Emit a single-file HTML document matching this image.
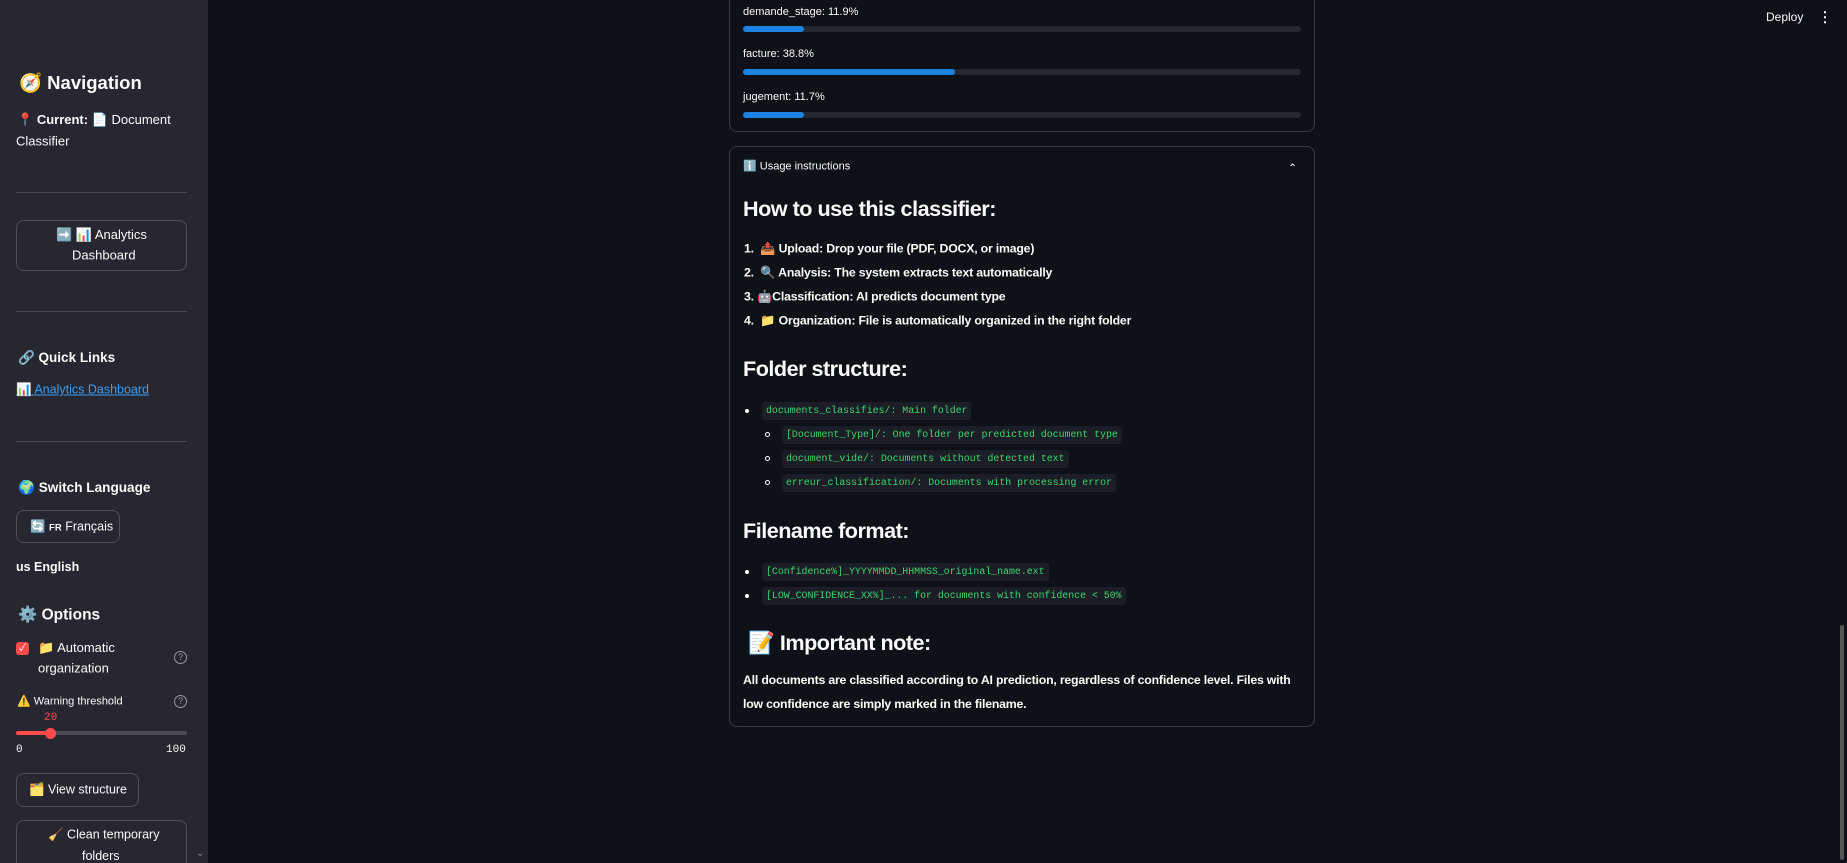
<!DOCTYPE html>
<html><head><meta charset="utf-8"><style>
*{margin:0;padding:0;box-sizing:border-box}
body{width:1847px;height:863px;background:#0e1117;color:#fafafa;font-family:"Liberation Sans","Noto Sans CJK JP",sans-serif;overflow:hidden;position:relative}
.a{position:absolute;white-space:nowrap}
#sb{position:absolute;left:0;top:0;width:208px;height:863px;background:#262730;overflow:hidden}
.hr{position:absolute;left:16px;width:171px;height:1px;background:#4a4b55}
.btn{position:absolute;border:1px solid #4f505a;border-radius:8px;background:#262730}
.t{transform:translateY(-50%)}
.bar{position:absolute;left:743px;width:558px;height:6px;border-radius:3px;background:#262730}
.bar i{position:absolute;left:0;top:0;height:6px;border-radius:3px;background:#1c83e1}
.code{position:absolute;height:18px;background:#1b1e26;border-radius:3px;color:#3dd56d;font-family:"Liberation Mono",monospace;font-size:9.9px;line-height:18px;padding:0 4px;white-space:nowrap}
.dot{position:absolute;width:4px;height:4px;border-radius:50%;background:#fafafa}
.cir{position:absolute;width:5px;height:5px;border-radius:50%;border:1px solid #fafafa}
h3{position:absolute;font-size:21.6px;font-weight:bold;letter-spacing:-0.5px;white-space:nowrap}
.li{font-size:12.3px;font-weight:bold;letter-spacing:-0.2px}
.help{position:absolute;width:13px;height:13px;border:1.3px solid #999;border-radius:50%;font-size:9px;color:#999;text-align:center;line-height:11px}
</style></head><body>
<div id="sb">
<div class="a t" style="left:19px;top:83px;font-size:18.5px;font-weight:bold">🧭 Navigation</div>
<div class="a t" style="left:17px;top:120px;font-size:13px">📍 <b>Current:</b> 📄 Document</div>
<div class="a t" style="left:16px;top:141px;font-size:13px">Classifier</div>
<div class="hr" style="top:192px"></div>
<div class="btn" style="left:16px;top:220px;width:171px;height:51px"></div>
<div class="a t" style="left:56px;top:235px;font-size:13px">➡️ 📊 Analytics</div>
<div class="a t" style="left:72px;top:255px;font-size:13px">Dashboard</div>
<div class="hr" style="top:311px"></div>
<div class="a t" style="left:18px;top:358px;font-size:13.5px;font-weight:bold">🔗 Quick Links</div>
<div class="a t" style="left:16px;top:390px;font-size:12.5px;color:#3d9df3;text-decoration:underline">📊 Analytics Dashboard</div>
<div class="hr" style="top:441px"></div>
<div class="a t" style="left:18px;top:488px;font-size:13.6px;font-weight:bold">🌍 Switch Language</div>
<div class="btn" style="left:16px;top:510px;width:104px;height:33px"></div>
<div class="a t" style="left:30px;top:527px;font-size:12.5px">🔄 <span style="font-size:9.5px;font-weight:bold">FR</span> Français</div>
<div class="a t" style="left:16px;top:567px;font-size:12.5px;font-weight:bold">us English</div>
<div class="a t" style="left:18px;top:615px;font-size:15.5px;font-weight:bold">⚙️ Options</div>
<div class="a" style="left:16px;top:642px;width:13px;height:13px;background:#ff4b4b;border-radius:3px;color:#fff;font-size:10px;text-align:center;line-height:13px">✓</div>
<div class="a t" style="left:38px;top:648px;font-size:13px">📁 Automatic</div>
<div class="a t" style="left:38px;top:668px;font-size:13px">organization</div>
<div class="help" style="left:174px;top:651px">?</div>
<div class="a t" style="left:17px;top:701px;font-size:11px">⚠️ Warning threshold</div>
<div class="help" style="left:174px;top:695px">?</div>
<div class="a t" style="left:44px;top:718px;font-size:11px;color:#ff4b4b;font-family:'Liberation Mono',monospace">20</div>
<div class="a" style="left:16px;top:731px;width:171px;height:4px;border-radius:2px;background:#4a4b55"></div>
<div class="a" style="left:16px;top:731px;width:35px;height:4px;border-radius:2px;background:#ff4b4b"></div>
<div class="a" style="left:45px;top:728px;width:11px;height:11px;border-radius:50%;background:#ff4b4b"></div>
<div class="a t" style="left:16px;top:750px;font-size:11px;font-family:'Liberation Mono',monospace">0</div>
<div class="a t" style="left:166px;top:750px;font-size:11px;font-family:'Liberation Mono',monospace">100</div>
<div class="btn" style="left:16px;top:773px;width:123px;height:34px"></div>
<div class="a t" style="left:29px;top:790px;font-size:12.5px">🗂️ View structure</div>
<div class="btn" style="left:16px;top:820px;width:171px;height:60px"></div>
<div class="a t" style="left:48px;top:835px;font-size:12.5px">🧹 Clean temporary</div>
<div class="a t" style="left:82px;top:856px;font-size:12.5px">folders</div>
<div class="a" style="left:196px;top:848px;font-size:10px;color:#888">⌄</div>
</div>
<div class="a t" style="left:1766px;top:17px;font-size:12px">Deploy</div>
<div class="a t" style="left:1818px;top:17px;font-size:14px;font-weight:bold">⋮</div>
<div class="a" style="left:1840px;top:625px;width:4px;height:235px;border-radius:2px;background:#555"></div>

<div class="a" style="left:729px;top:-10px;width:586px;height:142px;border:1px solid #3a3c44;border-radius:8px"></div>
<div class="a t" style="left:743px;top:12px;font-size:11px">demande_stage: 11.9%</div>
<div class="bar" style="top:26px"><i style="width:61px"></i></div>
<div class="a t" style="left:743px;top:54px;font-size:11px">facture: 38.8%</div>
<div class="bar" style="top:69px"><i style="width:212px"></i></div>
<div class="a t" style="left:743px;top:97px;font-size:11px">jugement: 11.7%</div>
<div class="bar" style="top:112px"><i style="width:61px"></i></div>

<div class="a" style="left:729px;top:146px;width:586px;height:581px;border:1px solid #3a3c44;border-radius:8px"></div>
<div class="a t" style="left:743px;top:166px;font-size:11px">ℹ️ Usage instructions</div>
<div class="a t" style="left:1288px;top:168px;font-size:11px">⌃</div>
<h3 style="left:743px;top:196px">How to use this classifier:</h3>
<div class="a t li" style="left:744px;top:249px">1.&nbsp; 📤 Upload: Drop your file (PDF, DOCX, or image)</div>
<div class="a t li" style="left:744px;top:273px">2.&nbsp; 🔍 Analysis: The system extracts text automatically</div>
<div class="a t li" style="left:744px;top:297px">3. 🤖Classification: AI predicts document type</div>
<div class="a t li" style="left:744px;top:321px">4.&nbsp; 📁 Organization: File is automatically organized in the right folder</div>
<h3 style="left:743px;top:356px">Folder structure:</h3>
<div class="dot" style="left:745px;top:409px"></div>
<div class="code" style="left:762px;top:402px">documents_classifies/: Main folder</div>
<div class="cir" style="left:765px;top:432px"></div>
<div class="code" style="left:782px;top:426px">[Document_Type]/: One folder per predicted document type</div>
<div class="cir" style="left:765px;top:456px"></div>
<div class="code" style="left:782px;top:450px">document_vide/: Documents without detected text</div>
<div class="cir" style="left:765px;top:480px"></div>
<div class="code" style="left:782px;top:474px">erreur_classification/: Documents with processing error</div>
<h3 style="left:743px;top:518px">Filename format:</h3>
<div class="dot" style="left:745px;top:570px"></div>
<div class="code" style="left:762px;top:563px">[Confidence%]_YYYYMMDD_HHMMSS_original_name.ext</div>
<div class="dot" style="left:745px;top:594px"></div>
<div class="code" style="left:762px;top:587px">[LOW_CONFIDENCE_XX%]_... for documents with confidence &lt; 50%</div>
<h3 style="left:748px;top:630px">📝 Important note:</h3>
<div class="a t li" style="left:743px;top:680px">All documents are classified according to AI prediction, regardless of confidence level. Files with</div>
<div class="a t li" style="left:743px;top:704px">low confidence are simply marked in the filename.</div>
</body></html>
